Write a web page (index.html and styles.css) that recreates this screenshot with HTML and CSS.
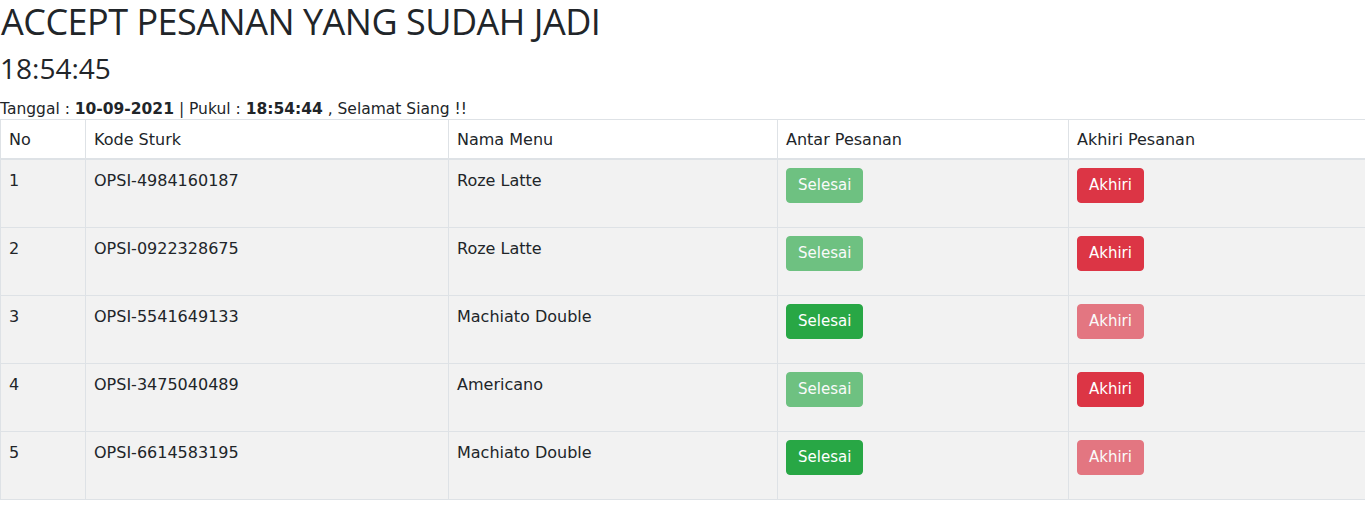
FILE: index.html
```html
<!DOCTYPE html>
<html>
<head>
<meta charset="utf-8">
<link rel="stylesheet" href="styles.css">
</head>
<body>
<h1 class="title">ACCEPT PESANAN YANG SUDAH JADI</h1>
<h2 class="clock">18:54:45</h2>
<p class="info">Tanggal : <b>10-09-2021</b> | Pukul : <b>18:54:44</b> , Selamat Siang !!</p>
<table class="orders">
  <thead>
    <tr>
      <th class="c-no">No</th>
      <th class="c-kode">Kode Sturk</th>
      <th class="c-menu">Nama Menu</th>
      <th class="c-antar">Antar Pesanan</th>
      <th class="c-akhir">Akhiri Pesanan</th>
    </tr>
  </thead>
  <tbody>
    <tr>
      <td>1</td><td>OPSI-4984160187</td><td>Roze Latte</td>
      <td><button class="btn btn-green off">Selesai</button></td>
      <td><button class="btn btn-red">Akhiri</button></td>
    </tr>
    <tr>
      <td>2</td><td>OPSI-0922328675</td><td>Roze Latte</td>
      <td><button class="btn btn-green off">Selesai</button></td>
      <td><button class="btn btn-red">Akhiri</button></td>
    </tr>
    <tr>
      <td>3</td><td>OPSI-5541649133</td><td>Machiato Double</td>
      <td><button class="btn btn-green">Selesai</button></td>
      <td><button class="btn btn-red off">Akhiri</button></td>
    </tr>
    <tr>
      <td>4</td><td>OPSI-3475040489</td><td>Americano</td>
      <td><button class="btn btn-green off">Selesai</button></td>
      <td><button class="btn btn-red">Akhiri</button></td>
    </tr>
    <tr>
      <td>5</td><td>OPSI-6614583195</td><td>Machiato Double</td>
      <td><button class="btn btn-green">Selesai</button></td>
      <td><button class="btn btn-red off">Akhiri</button></td>
    </tr>
  </tbody>
</table>
</body>
</html>
```
FILE: styles.css
```css
html, body {
  margin: 0;
  padding: 0;
  background: #fff;
  color: #212529;
  font-family: "DejaVu Sans", Verdana, sans-serif;
  overflow: hidden;
}
.title {
  font-family: "Open Sans", "Liberation Sans", sans-serif;
  font-weight: 400;
  font-size: 36px;
  line-height: 44px;
  margin: 0;
  padding-left: 1px;
  letter-spacing: -0.5px;
}
.clock {
  font-family: "Open Sans", "Liberation Sans", sans-serif;
  font-weight: 400;
  font-size: 28px;
  line-height: 40px;
  margin: 4px 0 0 0;
}
.info {
  font-size: 15.5px;
  line-height: 18px;
  margin: 12px 0 0 0;
}
.info b {
  font-weight: 700;
}
.orders {
  border-collapse: collapse;
  width: 1372px;
  margin-top: 1px;
  font-size: 16px;
  table-layout: fixed;
}
.orders th, .orders td {
  border: 1px solid #dee2e6;
  text-align: left;
  vertical-align: top;
  padding: 10px 8px 8px 8px;
  line-height: 20px;
}
.orders th {
  font-weight: 400;
  background: #fff;
  border-bottom: 2px solid #dee2e6;
  height: 20px;
}
.orders td {
  background: #f2f2f2;
  padding-top: 11px;
  padding-bottom: 10px;
  height: 46px;
}
.c-no { width: 68px; }
.c-kode { width: 346px; }
.c-menu { width: 312px; }
.c-antar { width: 274px; }
.btn {
  font-family: "DejaVu Sans", Verdana, sans-serif;
  font-size: 15px;
  line-height: 21px;
  padding: 6px 11px;
  border: 1px solid transparent;
  border-radius: 4px;
  color: #fff;
  margin-top: -3px;
}
.btn-green { background: #28a745; border-color: #28a745; }
.btn-red { background: #dc3545; border-color: #dc3545; }
.off { opacity: 0.65; }
```
